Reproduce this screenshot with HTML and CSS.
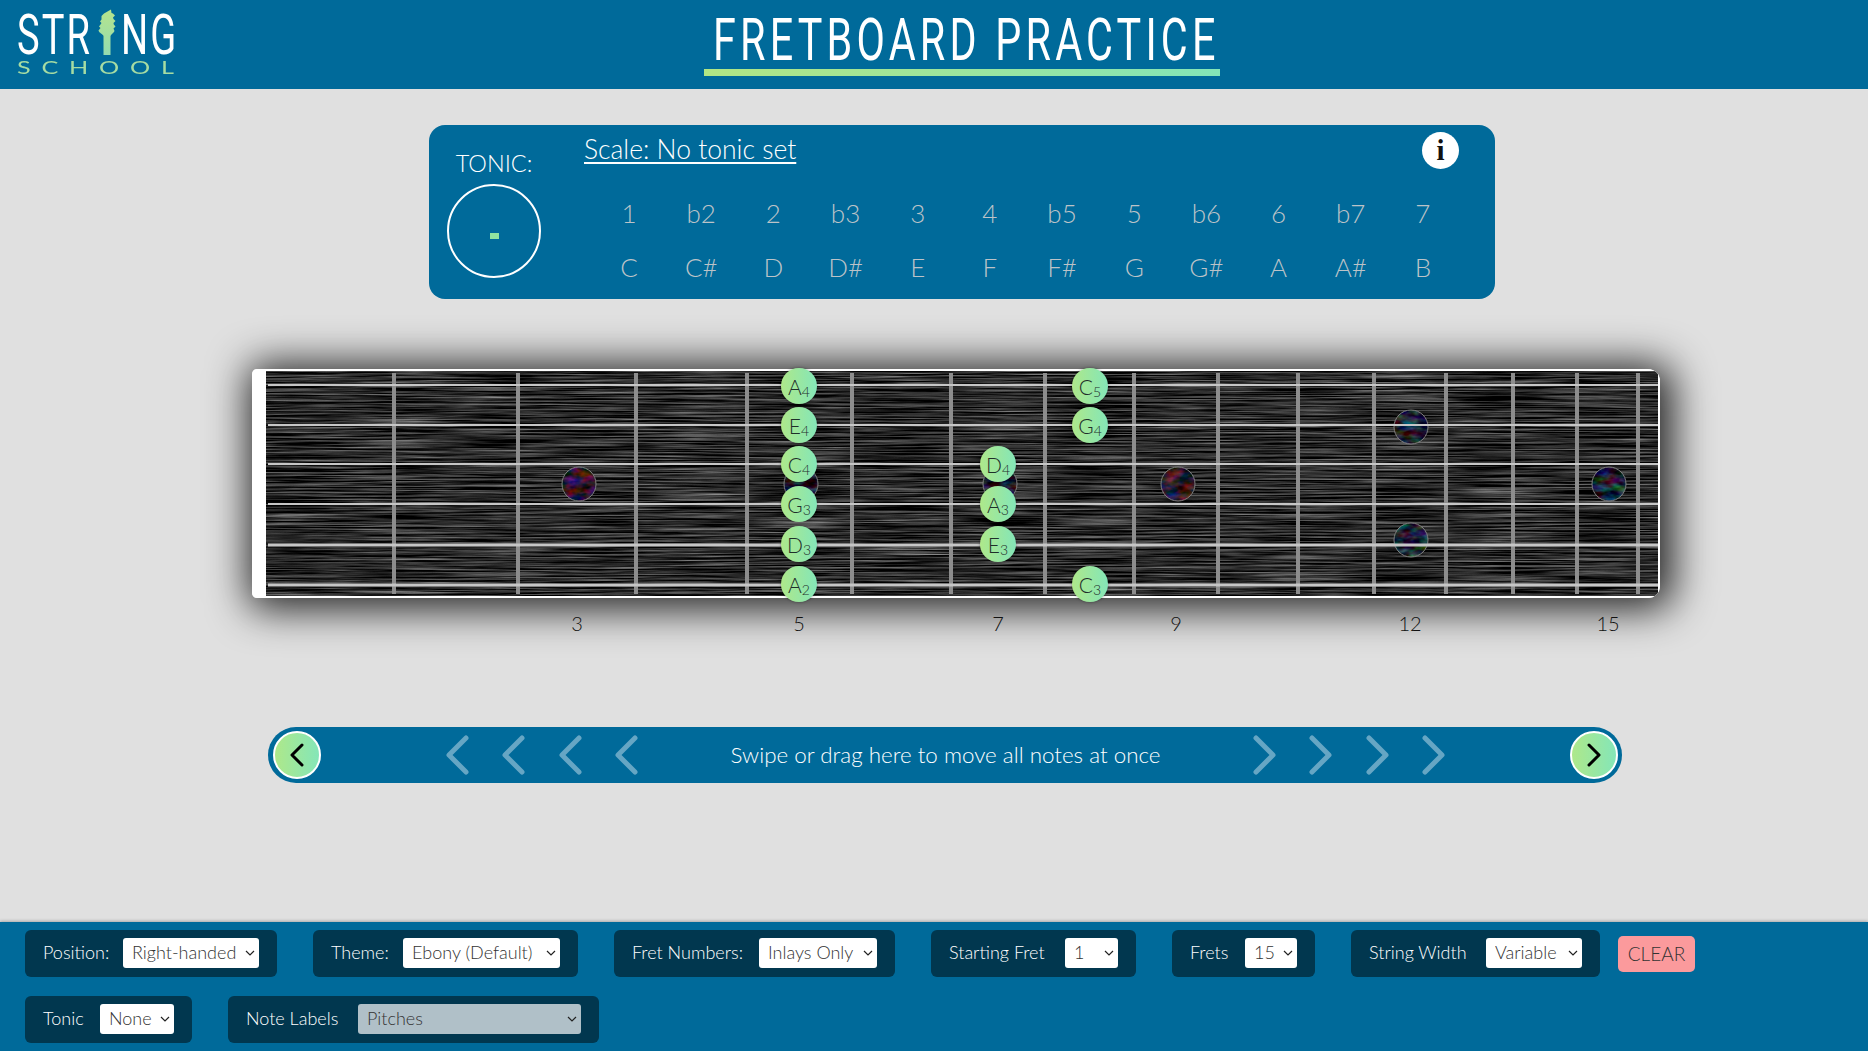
FILE: index.html
```html
<!DOCTYPE html>
<html lang="en">
<head>
<meta charset="utf-8">
<title>Fretboard Practice</title>
<link rel="stylesheet" href="styles.css">
</head>
<body>
<header class="topbar">
  <div class="logo">
    <div class="logo-main"><span class="logo-l"><span class="squeeze">STR</span></span><svg class="headstock" viewBox="0 0 18 46" width="18" height="46"><defs><linearGradient id="hs" x1="0" y1="0" x2="0" y2="1"><stop offset="0" stop-color="#b5e48c"/><stop offset="1" stop-color="#94dcb0"/></linearGradient></defs><path fill="url(#hs)" d="M5.5 46V27C5 25 1 24 .5 21.5L2.500 19 1 17.500 2.500 15.500 3.500 14 2 12.500 3.500 10.500 3.500 7 6 4.500 13 0.500 13.500 4 15 4.500 17 6.500 15 8.500 15.500 10 17.500 12 15.500 14 15.800 15.500 17.500 17.500 15.500 19.500 16.500 22C16 24 13 25 12.500 27V46Z"/></svg><span class="logo-r"><span class="squeeze">NG</span></span></div>
    <div class="logo-sub"><span class="stretch">SCHOOL</span></div>
  </div>
  <h1 class="title"><span class="title-text">FRETBOARD PRACTICE</span></h1>
</header>

<main class="stage">
  <section class="scale-panel">
    <div class="tonic">
      <div class="tonic-label">TONIC:</div>
      <div class="tonic-ring"><span class="tonic-dash"></span></div>
    </div>
    <div class="scale-main">
      <div class="scale-head"><a class="scale-name">Scale: No tonic set</a><span class="info">i</span></div>
      <div class="scale-grid">
        <span>1</span><span>b2</span><span>2</span><span>b3</span><span>3</span><span>4</span><span>b5</span><span>5</span><span>b6</span><span>6</span><span>b7</span><span>7</span>
        <span>C</span><span>C#</span><span>D</span><span>D#</span><span>E</span><span>F</span><span>F#</span><span>G</span><span>G#</span><span>A</span><span>A#</span><span>B</span>
      </div>
    </div>
  </section>

  <section class="board">
    <svg class="wood" viewBox="0 0 1408 229" width="1408" height="229">
      <defs>
        <filter id="grain" x="0" y="0" width="100%" height="100%" color-interpolation-filters="sRGB">
          <feTurbulence type="fractalNoise" baseFrequency="0.01 0.6" numOctaves="4" seed="11"/>
          <feColorMatrix type="matrix" values="0.9 0 0 0 -0.29  0.9 0 0 0 -0.29  0.9 0 0 0 -0.29  0 0 0 0 1"/>
        </filter>
        <filter id="aba-red" x="0" y="0" width="100%" height="100%" color-interpolation-filters="sRGB">
          <feTurbulence type="fractalNoise" baseFrequency="0.07 0.12" numOctaves="3" seed="4"/>
          <feColorMatrix type="matrix" values="1.1 0 0 0 -0.38  0 0.4 0 0 -0.1  0 0 0.9 0 -0.28  0 0 0 0 1"/>
        </filter>
        <filter id="aba-blue" x="0" y="0" width="100%" height="100%" color-interpolation-filters="sRGB">
          <feTurbulence type="fractalNoise" baseFrequency="0.06 0.13" numOctaves="3" seed="8"/>
          <feColorMatrix type="matrix" values="0.6 0 0 0 -0.2  0 1 0 0 -0.36  0 0.5 0.7 0 -0.4  0 0 0 0 1"/>
        </filter>
        <clipPath id="c1"><circle cx="327" cy="115" r="17"/></clipPath>
        <clipPath id="c2"><circle cx="549" cy="115" r="17"/></clipPath>
        <clipPath id="c3"><circle cx="748" cy="115" r="17"/></clipPath>
        <clipPath id="c4"><circle cx="926" cy="115" r="17"/></clipPath>
        <clipPath id="c5"><circle cx="1159" cy="58" r="17"/></clipPath>
        <clipPath id="c6"><circle cx="1159" cy="171" r="17"/></clipPath>
        <clipPath id="c7"><circle cx="1357" cy="115" r="17"/></clipPath>
      </defs>
      <rect class="nut" x="0" y="0" width="1408" height="229"/>
      <rect x="14" y="2" width="1392" height="225" filter="url(#grain)"/>
      <g class="frets">
        <line x1="142" x2="142" y1="4" y2="225"/><line x1="266" x2="266" y1="4" y2="225"/><line x1="384" x2="384" y1="4" y2="225"/><line x1="495" x2="495" y1="4" y2="225"/><line x1="600" x2="600" y1="4" y2="225"/><line x1="699" x2="699" y1="4" y2="225"/><line x1="793" x2="793" y1="4" y2="225"/><line x1="882" x2="882" y1="4" y2="225"/><line x1="966" x2="966" y1="4" y2="225"/><line x1="1046" x2="1046" y1="4" y2="225"/><line x1="1122" x2="1122" y1="4" y2="225"/><line x1="1194" x2="1194" y1="4" y2="225"/><line x1="1261" x2="1261" y1="4" y2="225"/><line x1="1325" x2="1325" y1="4" y2="225"/><line x1="1386" x2="1386" y1="4" y2="225"/>
      </g>
      <g class="inlay-group">
        <rect x="310" y="98" width="34" height="34" filter="url(#aba-red)" clip-path="url(#c1)"/><circle class="inlay-rim" cx="327" cy="115" r="17"/>
        <rect x="532" y="98" width="34" height="34" filter="url(#aba-blue)" clip-path="url(#c2)"/><circle class="inlay-rim" cx="549" cy="115" r="17"/>
        <rect x="731" y="98" width="34" height="34" filter="url(#aba-blue)" clip-path="url(#c3)"/><circle class="inlay-rim" cx="748" cy="115" r="17"/>
        <rect x="909" y="98" width="34" height="34" filter="url(#aba-red)" clip-path="url(#c4)"/><circle class="inlay-rim" cx="926" cy="115" r="17"/>
        <rect x="1142" y="41" width="34" height="34" filter="url(#aba-blue)" clip-path="url(#c5)"/><circle class="inlay-rim" cx="1159" cy="58" r="17"/>
        <rect x="1142" y="154" width="34" height="34" filter="url(#aba-blue)" clip-path="url(#c6)"/><circle class="inlay-rim" cx="1159" cy="171" r="17"/>
        <rect x="1340" y="98" width="34" height="34" filter="url(#aba-blue)" clip-path="url(#c7)"/><circle class="inlay-rim" cx="1357" cy="115" r="17"/>
      </g>
      <g class="strings">
        <line x1="16" x2="1406" y1="16" y2="16" stroke-width="2"/><line x1="16" x2="1406" y1="56" y2="56" stroke-width="2"/><line x1="16" x2="1406" y1="95" y2="95" stroke-width="2"/><line x1="16" x2="1406" y1="135" y2="135" stroke-width="2"/><line x1="16" x2="1406" y1="176" y2="176" stroke-width="3"/><line x1="16" x2="1406" y1="216" y2="216" stroke-width="3"/>
      </g>
    </svg>
    <div class="note" style="left:529px;top:-1px">A<sub>4</sub></div>
    <div class="note" style="left:529px;top:38px">E<sub>4</sub></div>
    <div class="note" style="left:529px;top:77px">C<sub>4</sub></div>
    <div class="note" style="left:529px;top:117px">G<sub>3</sub></div>
    <div class="note" style="left:529px;top:157px">D<sub>3</sub></div>
    <div class="note" style="left:529px;top:197px">A<sub>2</sub></div>
    <div class="note" style="left:728px;top:77px">D<sub>4</sub></div>
    <div class="note" style="left:728px;top:117px">A<sub>3</sub></div>
    <div class="note" style="left:728px;top:157px">E<sub>3</sub></div>
    <div class="note" style="left:820px;top:-1px">C<sub>5</sub></div>
    <div class="note" style="left:820px;top:38px">G<sub>4</sub></div>
    <div class="note" style="left:820px;top:197px">C<sub>3</sub></div>
  </section>

  <div class="fret-numbers">
    <span style="left:325px">3</span><span style="left:547px">5</span><span style="left:746px">7</span><span style="left:924px">9</span><span style="left:1158px">12</span><span style="left:1356px">15</span>
  </div>

  <section class="swipe">
    <button class="round-btn"><svg viewBox="0 0 14 24" width="14" height="24"><polyline points="12,2 2,12 12,22"/></svg></button>
    <div class="chevrons chevrons-left">
      <svg viewBox="0 0 23 40" width="23" height="40"><polyline points="20,3 3,20 20,37"/></svg>
      <svg viewBox="0 0 23 40" width="23" height="40"><polyline points="20,3 3,20 20,37"/></svg>
      <svg viewBox="0 0 23 40" width="23" height="40"><polyline points="20,3 3,20 20,37"/></svg>
      <svg viewBox="0 0 23 40" width="23" height="40"><polyline points="20,3 3,20 20,37"/></svg>
    </div>
    <div class="swipe-text">Swipe or drag here to move all notes at once</div>
    <div class="chevrons chevrons-right">
      <svg viewBox="0 0 23 40" width="23" height="40"><polyline points="3,3 20,20 3,37"/></svg>
      <svg viewBox="0 0 23 40" width="23" height="40"><polyline points="3,3 20,20 3,37"/></svg>
      <svg viewBox="0 0 23 40" width="23" height="40"><polyline points="3,3 20,20 3,37"/></svg>
      <svg viewBox="0 0 23 40" width="23" height="40"><polyline points="3,3 20,20 3,37"/></svg>
    </div>
    <button class="round-btn"><svg viewBox="0 0 14 24" width="14" height="24"><polyline points="2,2 12,12 2,22"/></svg></button>
  </section>
</main>

<footer class="controls">
  <div class="ctl ctl-position"><label>Position:</label><select><option>Right-handed</option></select></div>
  <div class="ctl ctl-theme"><label>Theme:</label><select><option>Ebony (Default)</option></select></div>
  <div class="ctl ctl-numbers"><label>Fret Numbers:</label><select><option>Inlays Only</option></select></div>
  <div class="ctl ctl-start"><label>Starting Fret</label><select><option>1</option></select></div>
  <div class="ctl ctl-frets"><label>Frets</label><select><option>15</option></select></div>
  <div class="ctl ctl-width"><label>String Width</label><select><option>Variable</option></select></div>
  <button class="clear">CLEAR</button>
  <div class="ctl ctl-tonic"><label>Tonic</label><select><option>None</option></select></div>
  <div class="ctl ctl-labels"><label>Note Labels</label><select disabled><option>Pitches</option></select></div>
</footer>
</body>
</html>
```

FILE: styles.css
```css
* { box-sizing: border-box; }
html, body { margin: 0; padding: 0; }
body {
  width: 1868px;
  height: 1051px;
  overflow: hidden;
  display: flex;
  flex-direction: column;
  background: #e0e0e0;
  font-family: "Lato", "Noto Sans", sans-serif;
  font-weight: 300;
  color: #333;
}

/* header */
.topbar {
  height: 89px;
  flex: none;
  background: #006a9a;
  display: grid;
  grid-template-columns: 205px auto;
}
.logo { padding: 9px 0 0 17px; }
.logo-main {
  display: flex;
  align-items: flex-end;
  height: 46px;
  font-family: "Roboto", "Liberation Sans", sans-serif;
  font-weight: 400;
  font-size: 56px;
  color: #fff;
}
.logo-l, .logo-r {
  display: block;
  flex: none;
  height: 40px;
  line-height: 40px;
  white-space: nowrap;
}
.logo-l { width: 81px; }
.logo-r { width: 56px; margin-left: 5px; }
.squeeze {
  display: inline-block;
  letter-spacing: 3px;
  transform: scaleX(.68);
  transform-origin: left center;
}
.headstock { flex: none; }
.logo-sub {
  margin-top: 5px;
  height: 15px;
  font-size: 18px;
  font-weight: 400;
  line-height: 15px;
  color: #a6dca3;
}
.stretch {
  display: inline-block;
  letter-spacing: 7.7px;
  white-space: nowrap;
  transform: scaleX(1.4);
  transform-origin: left center;
}
.title {
  margin: 11px 0 0 499px;
  width: 516px;
  height: 65px;
  padding-left: 9px;
  font-family: "Roboto", "Liberation Sans", sans-serif;
  font-weight: 400;
  font-size: 59px;
  line-height: 58px;
  color: #fff;
  white-space: nowrap;
  border-bottom: 7px solid;
  border-image: linear-gradient(90deg, #b2e684, #84e6b8) 1;
}
.title-text {
  display: inline-block;
  letter-spacing: 6px;
  transform: scaleX(.7);
  transform-origin: left center;
}

/* main */
.stage { flex: 1; }
.scale-panel {
  margin: 36px 0 0 429px;
  width: 1066px;
  height: 174px;
  background: #006a9a;
  border-radius: 16px;
  display: flex;
}
.tonic { width: 155px; padding: 24px 0 0 18px; }
.tonic-label {
  width: 94px;
  text-align: center;
  color: #fff;
  font-size: 23.5px;
  line-height: 28px;
}
.tonic-ring {
  margin-top: 7px;
  width: 94px;
  height: 94px;
  border: 2.5px solid #fff;
  border-radius: 50%;
  display: flex;
  align-items: center;
  justify-content: center;
}
.tonic-dash {
  display: block;
  width: 9px;
  height: 6px;
  margin-top: 10px;
  background: #90e4a0;
}
.scale-main { flex: 1; display: flex; flex-direction: column; }
.scale-head {
  flex: none;
  display: flex;
  justify-content: space-between;
  padding: 8px 36px 0 0;
  height: 69px;
}
.scale-name {
  color: #fff;
  font-size: 26.5px;
  line-height: 33px;
  height: 33px;
  text-decoration: underline;
  text-decoration-thickness: 2px;
  text-underline-offset: 3px;
}
.info {
  margin-top: -1px;
  width: 37px;
  height: 37px;
  border-radius: 50%;
  background: #fff;
  color: #111;
  text-align: center;
  font-family: "Liberation Serif", serif;
  font-weight: 700;
  font-size: 29px;
  line-height: 37px;
}
.scale-grid {
  flex: none;
  margin-left: 9px;
  width: 866px;
  display: grid;
  grid-template-columns: repeat(12, 1fr);
  grid-template-rows: 54px 38px;
  text-align: center;
  color: #bcc3c8;
  font-size: 26px;
  line-height: 38px;
}

/* fretboard */
.board {
  position: relative;
  margin: 70px 0 0 252px;
  width: 1408px;
  height: 229px;
  border-radius: 5px 12px 12px 5px;
  box-shadow: 5px 3px 40px 8px rgba(0, 0, 0, .85);
}
.wood { display: block; border-radius: 5px 12px 12px 5px; }
.nut { fill: #fff; }
.frets line { stroke: #8d8d8d; stroke-width: 4; }
.strings line { stroke: #c6c6c6; }
.inlay-rim { fill: none; stroke: #808080; stroke-width: 1; }
.note {
  position: absolute;
  width: 36px;
  height: 36px;
  border-radius: 50%;
  background: linear-gradient(90deg, #aee88a, #84e6b8);
  box-shadow: 0 0 3px rgba(0, 0, 0, .4);
  color: #1f2f2a;
  text-align: center;
  font-size: 21px;
  line-height: 37px;
}
.note sub {
  font-size: 14px;
  line-height: 0;
  vertical-align: -2px;
}
.fret-numbers {
  position: relative;
  margin-left: 252px;
  width: 1408px;
  height: 129px;
}
.fret-numbers span {
  position: absolute;
  top: 12px;
  transform: translateX(-50%);
  font-size: 20px;
  line-height: 26px;
  color: #111;
}

/* swipe bar */
.swipe {
  margin-left: 268px;
  width: 1354px;
  height: 56px;
  background: #006a9a;
  border-radius: 28px;
  display: flex;
  align-items: center;
  padding: 0 4px 0 5px;
}
.round-btn {
  flex: none;
  width: 48px;
  height: 48px;
  padding: 0;
  border: 2.5px solid #fff;
  border-radius: 50%;
  background: linear-gradient(90deg, #aee88a, #84e6b8);
  display: flex;
  align-items: center;
  justify-content: center;
}
.round-btn polyline { fill: none; stroke: #000; stroke-width: 3; stroke-linecap: round; stroke-linejoin: round; }
.chevrons {
  flex: none;
  width: 192px;
  display: flex;
  justify-content: space-between;
}
.chevrons-left { margin-left: 125px; }
.chevrons-right { margin-right: 125px; }
.chevrons polyline { fill: none; stroke: #66a6c4; stroke-width: 5; stroke-linecap: round; stroke-linejoin: round; }
.swipe-text {
  flex: 1;
  padding-bottom: 2px;
  text-align: center;
  color: #fff;
  font-size: 22.4px;
  white-space: nowrap;
}

/* controls */
.controls {
  flex: none;
  height: 129px;
  background: #006a9a;
  box-shadow: 0 -1px 3px rgba(0, 0, 0, .25);
  padding: 8px 0 0 25px;
  display: flex;
  flex-wrap: wrap;
  align-items: flex-start;
  align-content: flex-start;
  gap: 19px 36px;
}
.ctl {
  height: 47px;
  background: #01374f;
  border-radius: 6px;
  padding: 0 18px 1px;
  display: flex;
  align-items: center;
  justify-content: space-between;
  color: #fff;
  font-size: 18px;
  white-space: nowrap;
}
.ctl label { padding-bottom: 2px; }
.ctl select {
  appearance: none;
  height: 30px;
  padding: 0 4px 2px 9px;
  border: none;
  border-radius: 3px;
  background-color: #fff;
  background-image: url("data:image/svg+xml,%3Csvg xmlns='http://www.w3.org/2000/svg' width='10' height='6'%3E%3Cpath d='M1 1l4 4 4-4' fill='none' stroke='%23222' stroke-width='1.2'/%3E%3C/svg%3E");
  background-repeat: no-repeat;
  background-position: right 4px center;
  color: #333;
  font-family: inherit;
  font-weight: 300;
  font-size: 18px;
}
.ctl select:disabled { background-color: #b0c0c8; color: #333; opacity: 1; }
.ctl-position { width: 252px; } .ctl-position select { width: 136px; }
.ctl-theme { width: 265px; } .ctl-theme select { width: 157px; }
.ctl-numbers { width: 281px; } .ctl-numbers select { width: 118px; }
.ctl-start { width: 205px; } .ctl-start select { width: 53px; }
.ctl-frets { width: 143px; } .ctl-frets select { width: 52px; }
.ctl-width { width: 249px; } .ctl-width select { width: 96px; }
.ctl-tonic { width: 167px; } .ctl-tonic select { width: 74px; }
.ctl-labels { width: 371px; } .ctl-labels select { width: 223px; }
.clear {
  margin: 6px 172px 0 -18px;
  width: 77px;
  height: 36px;
  padding: 0 0 2px;
  border: none;
  border-radius: 5px;
  background: #fb9a9c;
  color: #333;
  font-family: inherit;
  font-weight: 300;
  font-size: 19px;
}
```
